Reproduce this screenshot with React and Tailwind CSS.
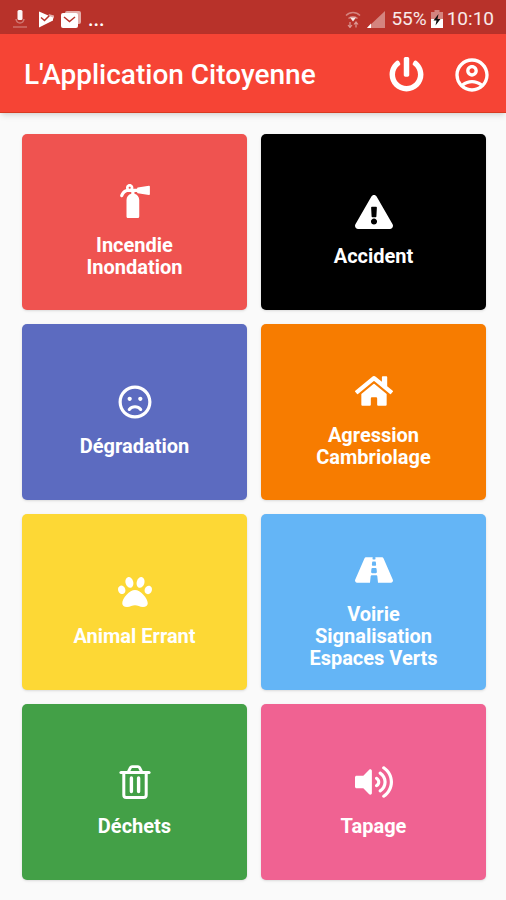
import {
  FaExclamationTriangle,
  FaFireExtinguisher,
  FaHome,
  FaPaw,
  FaPowerOff,
  FaRegFrown,
  FaRoad,
  FaVolumeUp,
} from 'react-icons/fa'
import { MdOutlineAccountCircle } from 'react-icons/md'

const TrashIcon = ({ className }) => (
  <svg className={className} viewBox="0 0 32 34" fill="none" stroke="#fff" strokeLinejoin="round" strokeLinecap="round" aria-hidden="true">
    <path d="M2 7.500h28" strokeWidth="3.200" />
    <path d="M9.500 6.500 11.500 2.500Q12 1.600 13 1.600h6q1 0 1.500 .9l2 4" strokeWidth="2.800" />
    <path d="M4.800 8v22q0 2.400 2.400 2.400h17.600q2.400 0 2.400-2.400V8" strokeWidth="3" />
    <path d="M12.400 13v13.500M19.600 13v13.500" strokeWidth="3.400" />
  </svg>
)

const CATEGORIES = [
  { id: 'incendie', lines: ['Incendie', 'Inondation'], icon: FaFireExtinguisher, color: 'bg-[#ef5350]' },
  { id: 'accident', lines: ['Accident'], icon: FaExclamationTriangle, color: 'bg-black' },
  { id: 'degradation', lines: ['Dégradation'], icon: FaRegFrown, color: 'bg-[#5c6bc0]' },
  { id: 'agression', lines: ['Agression', 'Cambriolage'], icon: FaHome, color: 'bg-[#f77c00]' },
  { id: 'animal', lines: ['Animal Errant'], icon: FaPaw, color: 'bg-[#fdd835]' },
  { id: 'voirie', lines: ['Voirie', 'Signalisation', 'Espaces Verts'], icon: FaRoad, color: 'bg-[#64b5f6]' },
  { id: 'dechets', lines: ['Déchets'], icon: TrashIcon, color: 'bg-[#43a047]' },
  { id: 'tapage', lines: ['Tapage'], icon: FaVolumeUp, color: 'bg-[#f06292]' },
]

const MicIcon = () => (
  <svg width="14" height="20" viewBox="0 0 14 20" fill="none" aria-hidden="true">
    <rect x="4.5" y="1" width="5" height="10" rx="1.5" fill="#fff" fillOpacity="0.95" />
    <path d="M3 10c.5 3 2 4 4 4s3.500-1 4-4" stroke="#fff" strokeOpacity="0.35" strokeWidth="1.500" />
    <path d="M0 18h14" stroke="#fff" strokeOpacity="0.3" strokeWidth="1.500" />
  </svg>
)

const PlayCheckIcon = () => (
  <svg width="16" height="18" viewBox="0 0 16 18" aria-hidden="true">
    <path d="M1 1.500 15 7.500v3L1 17.500z" fill="#fff" />
    <path d="M3 7.500 6.500 10.500 12 5" stroke="#b8322a" strokeWidth="1.500" fill="none" />
    <path d="M10.500 4 16 5.500v3L12.500 8" fill="#fff" fillOpacity="0.6" />
  </svg>
)

const MailIcon = () => (
  <svg width="20" height="18" viewBox="0 0 20 18" aria-hidden="true">
    <rect x="4" y="1" width="16" height="13" rx="2" fill="#fff" fillOpacity="0.6" />
    <rect x="0" y="3" width="17" height="15" rx="2" fill="#fff" />
    <path d="m3 7 5.500 4.500L14 7" stroke="#b8322a" strokeWidth="1.500" fill="none" />
  </svg>
)

const WifiIcon = () => (
  <svg width="16" height="17" viewBox="0 0 16 17" fill="none" aria-hidden="true">
    <path d="M1 4.500c4-4 10-4 14 0M3.500 7.500c2.500-2.500 6.500-2.500 9 0" stroke="#fff" strokeOpacity="0.4" strokeWidth="1.500" />
    <path d="M5 6.500h6L8 10.500z" fill="#fff" fillOpacity="0.9" />
    <path d="M5 11v5m-2-2 2 2.500L7 14M11 16.500v-5m-2 2 2-2.500 2 2.500" stroke="#fff" strokeOpacity="0.5" strokeWidth="1.200" />
  </svg>
)

const SignalIcon = () => (
  <svg width="18" height="18" viewBox="0 0 18 18" aria-hidden="true">
    <path d="M18 1v17H0z" fill="#fff" fillOpacity="0.4" />
    <path d="M4 13.500V18H0z" fill="#fff" />
  </svg>
)

const BatteryIcon = () => (
  <svg width="12" height="18" viewBox="0 0 12 18" aria-hidden="true">
    <path d="M3.500 0h5v2H12v7H0V2h3.500z" fill="#fff" fillOpacity="0.4" />
    <path d="M0 9h12v9H0z" fill="#fff" />
    <path d="M7.500 4 2.500 10.500h3L4.500 15.500 9.500 9h-3z" fill="#111" />
  </svg>
)

const StatusBar = () => (
  <div className="flex h-[34px] items-center justify-between bg-[#b8322a] pt-1 pr-3 pl-[13px] text-[19px] text-white">
    <div className="flex items-center gap-[7px]">
      <MicIcon />
      <div className="pl-1">
        <PlayCheckIcon />
      </div>
      <MailIcon />
      <span className="text-xl leading-5 font-medium">...</span>
    </div>
    <div className="flex items-center gap-1.5 leading-6">
      <WifiIcon />
      <SignalIcon />
      <div className="flex items-center gap-1">
        <span className="text-white/90">55%</span>
        <BatteryIcon />
        <span className="text-white/90">10:10</span>
      </div>
    </div>
  </div>
)

const Header = () => (
  <header className="flex h-[79px] items-center justify-between border-b border-[#d93a20] bg-[#f64435] pt-[3px] pr-3.5 pl-6 text-white shadow-md">
    <h1 className="text-[28px] leading-8 font-medium">L'Application Citoyenne</h1>
    <div className="flex items-center gap-7">
      <button type="button" aria-label="Déconnexion">
        <FaPowerOff size={35} />
      </button>
      <button type="button" aria-label="Mon compte">
        <MdOutlineAccountCircle size={40} />
      </button>
    </div>
  </header>
)

const CategoryTile = ({ category }) => {
  const Icon = category.icon
  return (
    <button
      type="button"
      className={`flex h-44 flex-col items-center justify-center gap-4 rounded-[5px] pt-[18px] text-white shadow-sm ${category.color}`}
    >
      <Icon className="h-[34px] w-[38px]" />
      <span className="text-xl leading-[22px] font-bold">
        {category.lines.map((line) => (
          <span key={line} className="block">{line}</span>
        ))}
      </span>
    </button>
  )
}

const App = () => (
  <div className="min-h-screen bg-[#fafafa] font-['Roboto',sans-serif]">
    <StatusBar />
    <Header />
    <main className="grid grid-cols-2 gap-3.5 px-5 pt-[21px] pb-5 pl-[22px]">
      {CATEGORIES.map((category) => (
        <CategoryTile key={category.id} category={category} />
      ))}
    </main>
  </div>
)

export default App
